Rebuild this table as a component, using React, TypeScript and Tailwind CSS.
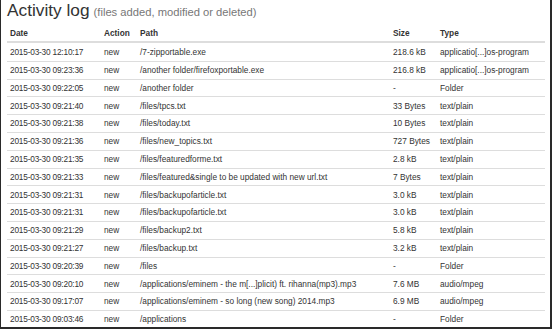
import React from 'react';

interface LogEntry {
  date: string;
  action: string;
  path: string;
  size: string;
  type: string;
}

const entries: LogEntry[] = [
  { date: '2015-03-30 12:10:17', action: 'new', path: '/7-zipportable.exe', size: '218.6 kB', type: 'applicatio[...]os-program' },
  { date: '2015-03-30 09:23:36', action: 'new', path: '/another folder/firefoxportable.exe', size: '216.8 kB', type: 'applicatio[...]os-program' },
  { date: '2015-03-30 09:22:05', action: 'new', path: '/another folder', size: '-', type: 'Folder' },
  { date: '2015-03-30 09:21:40', action: 'new', path: '/files/tpcs.txt', size: '33 Bytes', type: 'text/plain' },
  { date: '2015-03-30 09:21:38', action: 'new', path: '/files/today.txt', size: '10 Bytes', type: 'text/plain' },
  { date: '2015-03-30 09:21:36', action: 'new', path: '/files/new_topics.txt', size: '727 Bytes', type: 'text/plain' },
  { date: '2015-03-30 09:21:35', action: 'new', path: '/files/featuredforme.txt', size: '2.8 kB', type: 'text/plain' },
  { date: '2015-03-30 09:21:33', action: 'new', path: '/files/featured&single to be updated with new url.txt', size: '7 Bytes', type: 'text/plain' },
  { date: '2015-03-30 09:21:31', action: 'new', path: '/files/backupofarticle.txt', size: '3.0 kB', type: 'text/plain' },
  { date: '2015-03-30 09:21:31', action: 'new', path: '/files/backupofarticle.txt', size: '3.0 kB', type: 'text/plain' },
  { date: '2015-03-30 09:21:29', action: 'new', path: '/files/backup2.txt', size: '5.8 kB', type: 'text/plain' },
  { date: '2015-03-30 09:21:27', action: 'new', path: '/files/backup.txt', size: '3.2 kB', type: 'text/plain' },
  { date: '2015-03-30 09:20:39', action: 'new', path: '/files', size: '-', type: 'Folder' },
  { date: '2015-03-30 09:20:10', action: 'new', path: '/applications/eminem - the m[...]plicit) ft. rihanna(mp3).mp3', size: '7.6 MB', type: 'audio/mpeg' },
  { date: '2015-03-30 09:17:07', action: 'new', path: '/applications/eminem - so long (new song) 2014.mp3', size: '6.9 MB', type: 'audio/mpeg' },
  { date: '2015-03-30 09:03:46', action: 'new', path: '/applications', size: '-', type: 'Folder' },
];

const cols = 'grid grid-cols-[94px_36px_253px_47px_108px]';

export default function App() {
  return (
    <div
      className="w-[552px] h-[329px] box-border overflow-hidden bg-white border-l border-r-2 border-b-2 border-[#2a2a2a] pl-[6px] text-[#333]"
      style={{ fontFamily: '"Liberation Sans", Arial, sans-serif' }}
    >
      {/* titel */}
      <div className="h-[25px] pt-[1px] flex items-baseline whitespace-nowrap">
        <span className="text-[17.3px] leading-[18px] text-[#333]">Activity log</span>
        <span className="ml-[4px] text-[11.2px] text-[#777]">(files added, modified or deleted)</span>
      </div>

      <div className="w-[538px] text-[8.3px]">
        <div className={`${cols} h-[18px] items-center border-b-2 border-[#ddd] font-bold`}>
          <div className="pl-[3px]">Date</div>
          <div className="pl-[3px]">Action</div>
          <div className="pl-[3px]">Path</div>
          <div className="pl-[3px]">Size</div>
          <div className="pl-[3px]">Type</div>
        </div>
        {entries.map((e, i) => (
          <div
            key={i}
            className={`${cols} h-[17.8px] items-center whitespace-nowrap ${i > 0 ? 'border-t border-[#ddd]' : ''}`}
          >
            <div className="pl-[3px] tracking-[-0.2px]">{e.date}</div>
            <div className="pl-[3px]">{e.action}</div>
            <div className="pl-[3px] overflow-hidden">{e.path}</div>
            <div className="pl-[3px]">{e.size}</div>
            <div className="pl-[3px]">{e.type}</div>
          </div>
        ))}
      </div>
    </div>
  );
}
